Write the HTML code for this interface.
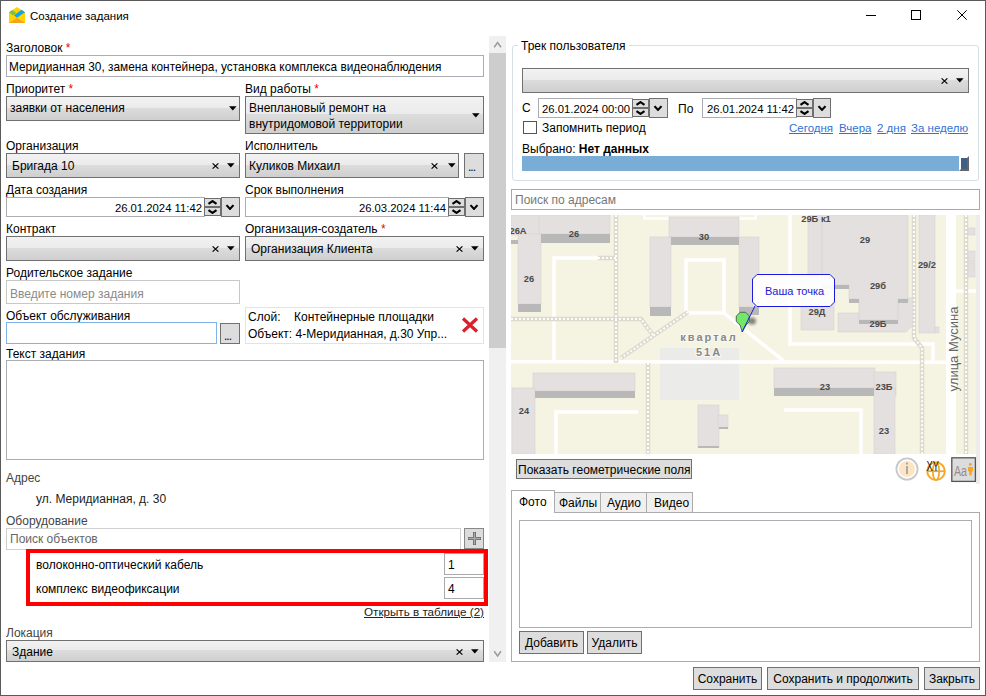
<!DOCTYPE html>
<html><head><meta charset="utf-8">
<style>
*{box-sizing:border-box;margin:0;padding:0}
html,body{width:986px;height:696px;overflow:hidden;background:#fff}
body{position:relative;font-family:"Liberation Sans",sans-serif;font-size:12px;color:#000}
.a{position:absolute}
.t{position:absolute;white-space:nowrap;line-height:14px}
.tb{position:absolute;border:1px solid #abadb3;background:#fff}
.cb{position:absolute;border:1px solid #707070;background:linear-gradient(#f2f2f2,#ebebeb 46%,#dddddd 46%,#cfcfcf)}
.btn{position:absolute;border:1px solid #707070;background:#dddddd}
.req{color:#e00}
.lnk{color:#1a5fc9;text-decoration:underline}
</style></head><body>

<div class="a" style="left:0px;top:0px;width:986px;height:696px;border:1px solid #5a5a5a"></div>
<svg class="a" style="left:9px;top:7px" width="16" height="16" viewBox="0 0 16 16">
<polygon points="0,5.3 8,0 16,5.3 16,16 0,16" fill="#ffd400"/>
<polygon points="0,5.3 3.2,3 7.2,5.8 4,8.4" fill="#7dc242"/>
<polygon points="12.6,2.7 16,5.3 8,10.8 5,8.3" fill="#12a5ea"/>
<polygon points="0,16 8,11 16,16" fill="#f6a21a"/>
</svg>
<div class="t" style="left:30px;top:9px;font-size:11.5px">Создание задания</div>
<div class="a" style="left:866px;top:15px;width:10px;height:1px;background:#000"></div>
<div class="a" style="left:911px;top:10px;width:10px;height:10px;border:1px solid #000"></div>
<svg class="a" style="left:957px;top:10px" width="10" height="10" viewBox="0 0 10 10"><path d="M0.3,0.3 L9.7,9.7 M9.7,0.3 L0.3,9.7" stroke="#000" stroke-width="1"/></svg>
<div class="t" style="left:6px;top:41px;">Заголовок <span class="req">*</span></div>
<div class="tb" style="left:6px;top:55px;width:478px;height:22px;"></div>
<div class="t" style="left:9px;top:60px;font-size:11.85px">Меридианная 30, замена контейнера, установка комплекса видеонаблюдения</div>
<div class="t" style="left:6px;top:82px;">Приоритет <span class="req">*</span></div>
<div class="cb" style="left:6px;top:96px;width:234px;height:25px;"></div>
<div class="t" style="left:10px;top:101px;">заявки от населения</div>
<svg class="a" style="left:229px;top:106px" width="8" height="5" viewBox="0 0 8 5"><path d="M0,0.3 L7.6,0.3 L3.8,4.6 Z" fill="#000"/></svg>
<div class="t" style="left:245px;top:82px;">Вид работы <span class="req">*</span></div>
<div class="cb" style="left:245px;top:96px;width:239px;height:38px;"></div>
<div class="t" style="left:249px;top:101px;">Внеплановый ремонт на</div>
<div class="t" style="left:249px;top:117px;">внутридомовой территории</div>
<svg class="a" style="left:472px;top:113px" width="8" height="5" viewBox="0 0 8 5"><path d="M0,0.3 L7.6,0.3 L3.8,4.6 Z" fill="#000"/></svg>
<div class="t" style="left:6px;top:139px;">Организация</div>
<div class="cb" style="left:6px;top:153px;width:234px;height:25px;"></div>
<div class="t" style="left:12px;top:159px;">Бригада 10</div>
<svg class="a" style="left:227px;top:163px" width="8" height="5" viewBox="0 0 8 5"><path d="M0,0.3 L7.6,0.3 L3.8,4.6 Z" fill="#000"/></svg>
<svg class="a" style="left:212px;top:163px" width="7" height="6" viewBox="0 0 7 6"><path d="M0.6,0.4 L6.4,5.6 M6.4,0.4 L0.6,5.6" stroke="#000" stroke-width="1.2"/></svg>
<div class="t" style="left:245px;top:139px;">Исполнитель</div>
<div class="cb" style="left:245px;top:153px;width:214px;height:25px;"></div>
<div class="t" style="left:249px;top:159px;">Куликов Михаил</div>
<svg class="a" style="left:448px;top:163px" width="8" height="5" viewBox="0 0 8 5"><path d="M0,0.3 L7.6,0.3 L3.8,4.6 Z" fill="#000"/></svg>
<svg class="a" style="left:431px;top:163px" width="7" height="6" viewBox="0 0 7 6"><path d="M0.6,0.4 L6.4,5.6 M6.4,0.4 L0.6,5.6" stroke="#000" stroke-width="1.2"/></svg>
<div class="btn" style="left:464px;top:153px;width:20px;height:25px;"></div>
<div class="t" style="left:464px;width:20px;text-align:center;top:159px"></div>
<div class="t" style="left:468px;top:160px;font-size:12px;letter-spacing:-1px">...</div>
<div class="t" style="left:6px;top:183px;">Дата создания</div>
<div class="tb" style="left:6px;top:197px;width:199px;height:20px;"></div>
<div class="t" style="right:784px;top:201px;font-size:11.3px">26.01.2024 11:42</div>
<div class="btn" style="left:204px;top:198px;width:17px;height:9px;border-color:#6e6e6e"></div>
<div class="btn" style="left:204px;top:207px;width:17px;height:9px;border-color:#6e6e6e"></div>
<svg class="a" style="left:207px;top:200px" width="11" height="5" viewBox="0 0 11 5"><path d="M1.5,3.9 L5.5,1.1 L9.5,3.9" stroke="#000" stroke-width="2.1" fill="none"/></svg>
<svg class="a" style="left:207px;top:209px" width="11" height="5" viewBox="0 0 11 5"><path d="M1.5,1.1 L5.5,3.9 L9.5,1.1" stroke="#000" stroke-width="2.1" fill="none"/></svg>
<div class="btn" style="left:221px;top:197px;width:19px;height:20px;"></div>
<svg class="a" style="left:225px;top:204px" width="10" height="6" viewBox="0 0 10 6"><path d="M1.5,1.1 L5.0,4.9 L8.5,1.1" stroke="#000" stroke-width="2.1" fill="none"/></svg>
<div class="t" style="left:245px;top:183px;">Срок выполнения</div>
<div class="tb" style="left:245px;top:197px;width:204px;height:20px;"></div>
<div class="t" style="right:540px;top:201px;font-size:11.3px">26.03.2024 11:44</div>
<div class="btn" style="left:448px;top:198px;width:17px;height:9px;border-color:#6e6e6e"></div>
<div class="btn" style="left:448px;top:207px;width:17px;height:9px;border-color:#6e6e6e"></div>
<svg class="a" style="left:451px;top:200px" width="11" height="5" viewBox="0 0 11 5"><path d="M1.5,3.9 L5.5,1.1 L9.5,3.9" stroke="#000" stroke-width="2.1" fill="none"/></svg>
<svg class="a" style="left:451px;top:209px" width="11" height="5" viewBox="0 0 11 5"><path d="M1.5,1.1 L5.5,3.9 L9.5,1.1" stroke="#000" stroke-width="2.1" fill="none"/></svg>
<div class="btn" style="left:465px;top:197px;width:19px;height:20px;"></div>
<svg class="a" style="left:469px;top:204px" width="10" height="6" viewBox="0 0 10 6"><path d="M1.5,1.1 L5.0,4.9 L8.5,1.1" stroke="#000" stroke-width="2.1" fill="none"/></svg>
<div class="t" style="left:6px;top:222px;">Контракт</div>
<div class="cb" style="left:6px;top:236px;width:234px;height:25px;"></div>
<svg class="a" style="left:227px;top:246px" width="8" height="5" viewBox="0 0 8 5"><path d="M0,0.3 L7.6,0.3 L3.8,4.6 Z" fill="#000"/></svg>
<svg class="a" style="left:212px;top:246px" width="7" height="6" viewBox="0 0 7 6"><path d="M0.6,0.4 L6.4,5.6 M6.4,0.4 L0.6,5.6" stroke="#000" stroke-width="1.2"/></svg>
<div class="t" style="left:245px;top:222px;">Организация-создатель <span class="req">*</span></div>
<div class="cb" style="left:245px;top:236px;width:239px;height:25px;"></div>
<div class="t" style="left:251px;top:242px;">Организация Клиента</div>
<svg class="a" style="left:471px;top:246px" width="8" height="5" viewBox="0 0 8 5"><path d="M0,0.3 L7.6,0.3 L3.8,4.6 Z" fill="#000"/></svg>
<svg class="a" style="left:456px;top:246px" width="7" height="6" viewBox="0 0 7 6"><path d="M0.6,0.4 L6.4,5.6 M6.4,0.4 L0.6,5.6" stroke="#000" stroke-width="1.2"/></svg>
<div class="t" style="left:6px;top:266px;">Родительское задание</div>
<div class="tb" style="left:6px;top:280px;width:234px;height:24px;border-color:#c8c8c8"></div>
<div class="t" style="left:10px;top:287px;color:#8a8a8a">Введите номер задания</div>
<div class="t" style="left:6px;top:309px;">Объект обслуживания</div>
<div class="tb" style="left:6px;top:322px;width:211px;height:22px;border-color:#7eb4ea"></div>
<div class="btn" style="left:220px;top:323px;width:20px;height:21px;"></div>
<div class="t" style="left:220px;width:20px;text-align:center;top:327px"></div>
<div class="t" style="left:224px;top:329px;font-size:12px;letter-spacing:-1px">...</div>
<div class="tb" style="left:245px;top:307px;width:239px;height:37px;border-color:#e3e3e3"></div>
<div class="t" style="left:248px;top:310px;">Слой:</div>
<div class="t" style="left:294px;top:310px;">Контейнерные площадки</div>
<div class="t" style="left:248px;top:327px;">Объект: 4-Меридианная, д.30 Упр...</div>
<svg class="a" style="left:461px;top:317px" width="18" height="16" viewBox="0 0 18 16"><path d="M2,1.5 L16,14.5 M16,1.5 L2,14.5" stroke="#d8222a" stroke-width="3.2"/></svg>
<div class="t" style="left:6px;top:347px;">Текст задания</div>
<div class="tb" style="left:6px;top:360px;width:478px;height:100px;"></div>
<div class="t" style="left:6px;top:471px;color:#444">Адрес</div>
<div class="t" style="left:36px;top:492px;color:#222">ул. Меридианная, д. 30</div>
<div class="t" style="left:6px;top:514px;color:#444">Оборудование</div>
<div class="tb" style="left:6px;top:528px;width:455px;height:22px;border-color:#d0d0d0"></div>
<div class="t" style="left:10px;top:532px;color:#666">Поиск объектов</div>
<div class="btn" style="left:464px;top:528px;width:20px;height:21px;border-color:#888;background:#dcdcdc"></div>
<svg class="a" style="left:467px;top:531px" width="15" height="15" viewBox="0 0 15 15"><path d="M7.5,1 L7.5,14 M1,7.5 L14,7.5" stroke="#666" stroke-width="3"/><path d="M7.5,1.5 L7.5,13.5 M1.5,7.5 L13.5,7.5" stroke="#aaa" stroke-width="1.4"/></svg>
<div class="a" style="left:26px;top:549px;width:462px;height:57px;border:4px solid #f00"></div>
<div class="t" style="left:36px;top:558px;">волоконно-оптический кабель</div>
<div class="tb" style="left:444px;top:553px;width:40px;height:22px;border-color:#aaa"></div>
<div class="t" style="left:448px;top:558px;">1</div>
<div class="t" style="left:36px;top:582px;">комплекс видеофиксации</div>
<div class="tb" style="left:444px;top:577px;width:40px;height:22px;border-color:#aaa"></div>
<div class="t" style="left:448px;top:582px;">4</div>
<div class="t" style="right:502px;top:605px;color:#222;text-decoration:underline;font-size:11.65px">Открыть в таблице (2)</div>
<div class="t" style="left:6px;top:626px;color:#444">Локация</div>
<div class="cb" style="left:6px;top:640px;width:478px;height:22px;"></div>
<div class="t" style="left:12px;top:645px;">Здание</div>
<svg class="a" style="left:471px;top:649px" width="8" height="5" viewBox="0 0 8 5"><path d="M0,0.3 L7.6,0.3 L3.8,4.6 Z" fill="#000"/></svg>
<svg class="a" style="left:456px;top:649px" width="7" height="6" viewBox="0 0 7 6"><path d="M0.6,0.4 L6.4,5.6 M6.4,0.4 L0.6,5.6" stroke="#000" stroke-width="1.2"/></svg>
<div class="a" style="left:489px;top:36px;width:17px;height:626px;background:#f0f0f0"></div>
<div class="a" style="left:489px;top:53px;width:17px;height:295px;background:#cdcdcd"></div>
<svg class="a" style="left:492px;top:40px" width="11" height="9" viewBox="0 0 11 9"><path d="M2.2,7.3 L5.6,2.6 L9,7.3" stroke="#9a9a9a" stroke-width="1.5" fill="none"/></svg>
<svg class="a" style="left:492px;top:649px" width="11" height="9" viewBox="0 0 11 9"><path d="M2.2,2.3 L5.6,7 L9,2.3" stroke="#9a9a9a" stroke-width="1.5" fill="none"/></svg>
<div class="a" style="left:512px;top:45px;width:467px;height:136px;border:1px solid #d5dfe5;border-radius:3px"></div>
<div class="t" style="left:518px;top:39px;background:#fff;padding:0 3px">Трек пользователя</div>
<div class="cb" style="left:522px;top:68px;width:447px;height:25px;"></div>
<svg class="a" style="left:956px;top:78px" width="8" height="5" viewBox="0 0 8 5"><path d="M0,0.3 L7.6,0.3 L3.8,4.6 Z" fill="#000"/></svg>
<svg class="a" style="left:941px;top:78px" width="7" height="6" viewBox="0 0 7 6"><path d="M0.6,0.4 L6.4,5.6 M6.4,0.4 L0.6,5.6" stroke="#000" stroke-width="1.2"/></svg>
<div class="t" style="left:522px;top:101px;">С</div>
<div class="tb" style="left:538px;top:98px;width:95px;height:20px;"></div>
<div class="t" style="right:356px;top:102px;font-size:11.3px">26.01.2024 00:00</div>
<div class="btn" style="left:632px;top:99px;width:17px;height:9px;border-color:#6e6e6e"></div>
<div class="btn" style="left:632px;top:108px;width:17px;height:9px;border-color:#6e6e6e"></div>
<svg class="a" style="left:635px;top:101px" width="11" height="5" viewBox="0 0 11 5"><path d="M1.5,3.9 L5.5,1.1 L9.5,3.9" stroke="#000" stroke-width="2.1" fill="none"/></svg>
<svg class="a" style="left:635px;top:110px" width="11" height="5" viewBox="0 0 11 5"><path d="M1.5,1.1 L5.5,3.9 L9.5,1.1" stroke="#000" stroke-width="2.1" fill="none"/></svg>
<div class="btn" style="left:649px;top:98px;width:19px;height:20px;"></div>
<svg class="a" style="left:653px;top:105px" width="10" height="6" viewBox="0 0 10 6"><path d="M1.5,1.1 L5.0,4.9 L8.5,1.1" stroke="#000" stroke-width="2.1" fill="none"/></svg>
<div class="t" style="left:678px;top:102px;">По</div>
<div class="tb" style="left:702px;top:98px;width:95px;height:20px;"></div>
<div class="t" style="right:192px;top:102px;font-size:11.3px">26.01.2024 11:42</div>
<div class="btn" style="left:796px;top:99px;width:17px;height:9px;border-color:#6e6e6e"></div>
<div class="btn" style="left:796px;top:108px;width:17px;height:9px;border-color:#6e6e6e"></div>
<svg class="a" style="left:799px;top:101px" width="11" height="5" viewBox="0 0 11 5"><path d="M1.5,3.9 L5.5,1.1 L9.5,3.9" stroke="#000" stroke-width="2.1" fill="none"/></svg>
<svg class="a" style="left:799px;top:110px" width="11" height="5" viewBox="0 0 11 5"><path d="M1.5,1.1 L5.5,3.9 L9.5,1.1" stroke="#000" stroke-width="2.1" fill="none"/></svg>
<div class="btn" style="left:813px;top:98px;width:18px;height:20px;"></div>
<svg class="a" style="left:817px;top:105px" width="10" height="6" viewBox="0 0 10 6"><path d="M1.5,1.1 L5.0,4.9 L8.5,1.1" stroke="#000" stroke-width="2.1" fill="none"/></svg>
<div class="a" style="left:523px;top:121px;width:14px;height:13px;border:1px solid #555;background:#fff"></div>
<div class="t" style="left:542px;top:121px;">Запомнить период</div>
<div class="t" style="left:789px;top:121px;color:#2f73d4;text-decoration:underline;font-size:11.5px">Сегодня</div>
<div class="t" style="left:839px;top:121px;color:#2f73d4;text-decoration:underline;font-size:11.5px">Вчера</div>
<div class="t" style="left:877px;top:121px;color:#2f73d4;text-decoration:underline;font-size:11.5px">2 дня</div>
<div class="t" style="left:911px;top:121px;color:#2f73d4;text-decoration:underline;font-size:11.5px">За неделю</div>
<div class="t" style="left:522px;top:142px;">Выбрано: <b>Нет данных</b></div>
<div class="a" style="left:522px;top:156px;width:437px;height:15px;background:#7aadd6"></div>
<div class="a" style="left:959px;top:156px;width:10px;height:15px;background:#3d5f8a;border-left:2px solid #fff;border-top:2px solid #fff;border-right:2px solid #666;border-bottom:2px solid #666"></div>
<div class="tb" style="left:511px;top:189px;width:469px;height:21px;border-color:#a9a9a9"></div>
<div class="t" style="left:515px;top:193px;color:#777">Поиск по адресам</div>
<svg class="a" style="left:511px;top:215px" width="465" height="239" viewBox="511 215 465 239">
<rect x="511" y="215" width="465" height="239" fill="#f5f3e1"/>
<!-- parking -->
<rect x="660" y="348" width="79" height="52" fill="#ebebe9"/>
<!-- white roads -->
<g stroke="#fff" fill="none" stroke-width="3.5">
<path d="M511,361.8 L946,362.3"/>
<path d="M644.5,213 L644.5,218.5 L755.5,218.5 L755.5,213" stroke-width="2.6"/>
<path d="M554,363 L554,258 L598,258"/>
<path d="M686,313 L686,260 L724,260 L724,313 L686,313"/>
<path d="M724,313 L785,362"/>
<path d="M790,215 L790,344 L933,344 L933,362"/>
<path d="M638,412 L556,412 L556,454"/>
<path d="M784,410 L861,410 L861,454"/>
<path d="M956,291 L976,291"/>
</g>
<rect x="946" y="215" width="10" height="239" fill="#fff"/>
<!-- footways -->
<g fill="none">
<g stroke="#dddbcf" stroke-width="4.5">
<path d="M616,215 L616,363"/>
<path d="M511,319 L641,319 L653,335"/>
<path d="M688,312 L621,358"/>
<path d="M598,258 L616,258"/>
<path d="M648,363 L648,454"/>
<path d="M914,215 L914,338 L922,348 L922,454"/>
<path d="M966,215 L966,454"/>
</g>
<g stroke="#fff" stroke-width="2" stroke-dasharray="2 2">
<path d="M616,215 L616,363"/>
<path d="M511,319 L641,319 L653,335"/>
<path d="M688,312 L621,358"/>
<path d="M598,258 L616,258"/>
<path d="M648,363 L648,454"/>
<path d="M914,215 L914,338 L922,348 L922,454"/>
<path d="M966,215 L966,454"/>
</g>
</g>
<!-- buildings -->
<g fill="#e4e0e0" stroke="#d6d2d2" stroke-width="0.6">
<rect x="511" y="215" width="29" height="20"/>
<rect x="539" y="215" width="71" height="19"/>
<rect x="518" y="234" width="23" height="70"/>
<rect x="669" y="217" width="70" height="20"/>
<rect x="650" y="237" width="21" height="70"/>
<rect x="739" y="237" width="20" height="70"/>
<rect x="533" y="373" width="102" height="18"/>
<rect x="512" y="388" width="23" height="66"/>
<rect x="698" y="405" width="21" height="42"/>
<rect x="718" y="415" width="10" height="13"/>
<rect x="808" y="215" width="14" height="70"/>
<rect x="801" y="281" width="33" height="49"/>
<polygon points="838,313 898,313 898,298 913,298 913,325 906,332 838,332"/>
<polygon points="822,215 908,215 908,299 898,299 898,320 859,320 859,299 849,299 849,285 822,285"/>
<rect x="919" y="215" width="16" height="118"/>
<rect x="935" y="327" width="4" height="6"/>
<rect x="774" y="368" width="101" height="20"/>
<rect x="874" y="372" width="22" height="24"/>
<rect x="874" y="388" width="21" height="66"/>
<rect x="968" y="228" width="7" height="7"/>
<rect x="968" y="251" width="7" height="11"/>
<rect x="968" y="263" width="7" height="14"/>
</g>
<g fill="#b9b8b8">
<rect x="511" y="240" width="7" height="4"/>
<rect x="541" y="234" width="69" height="9"/>
<rect x="518" y="304" width="23" height="8"/>
<rect x="671" y="237" width="68" height="8"/>
<rect x="650" y="307" width="21" height="9"/>
<rect x="739" y="307" width="20" height="8"/>
<rect x="535" y="391" width="100" height="7"/>
<rect x="698" y="446" width="21" height="2"/>
<rect x="719" y="427" width="9" height="2"/>
<rect x="822" y="285" width="27" height="4"/>
<rect x="849" y="299" width="10" height="4"/>
<rect x="898" y="299" width="10" height="4"/>
<rect x="859" y="320" width="39" height="4"/>
<rect x="774" y="388" width="100" height="8"/>
</g>
<!-- labels -->
<g font-family="Liberation Sans" font-size="9.3" font-weight="bold" fill="#4a4a4a" text-anchor="middle">
<text x="518" y="234">26A</text>
<text x="574" y="237">26</text>
<text x="529" y="282">26</text>
<text x="704" y="240">30</text>
<text x="524" y="414">24</text>
<text x="825" y="390">23</text>
<text x="884" y="390">23Б</text>
<text x="884" y="434">23</text>
<text x="816" y="222">29Б к1</text>
<text x="865" y="243">29</text>
<text x="927" y="268">29/2</text>
<text x="878" y="289">29б</text>
<text x="817" y="315">29Д</text>
<text x="878" y="327">29Б</text>
</g>
<g font-family="Liberation Sans" font-size="11" font-weight="bold" fill="#888" stroke="#fbfaf2" stroke-width="2" paint-order="stroke" text-anchor="middle" letter-spacing="2">
<text x="709" y="341">квартал</text>
<text x="709" y="356">51A</text>
</g>
<text font-family="Liberation Sans" font-size="13" fill="#666" text-anchor="middle" transform="translate(957.5,349) rotate(-90)">улица Мусина</text>
<!-- marker -->
<defs><filter id="blr" x="-1" y="-1" width="3" height="3"><feGaussianBlur stdDeviation="1.8"/></filter></defs>
<ellipse cx="752" cy="321" rx="4" ry="3.5" fill="#333" opacity="0.6" filter="url(#blr)"/>
<polygon points="740.3,312.3 745.6,312.3 749.3,316 749.3,321.6 746,325 742.3,332 740,325 736.3,321.6 736.3,316" fill="#72e86a" stroke="#3d4a3d" stroke-width="0.8"/>
<path d="M742,332 L755,306" stroke="#1a1ae0" stroke-width="1"/>
<polygon points="757,274.5 830,274.5 834.5,279 834.5,302 830,306.5 757,306.5 752.5,302 752.5,279" fill="#fff" fill-opacity="0.92" stroke="#1a1ae0" stroke-width="1"/>
<text x="765" y="295" font-family="Liberation Sans" font-size="11" fill="#2020d8">Ваша точка</text>
</svg>
<div class="a" style="left:976px;top:215px;width:4px;height:269px;background:#ececec"></div>
<!-- map tools -->
<svg class="a" style="left:894px;top:454px" width="86" height="30" viewBox="894 454 86 30">
<circle cx="907" cy="469" r="10.6" fill="#fff" stroke="#c8c8c8" stroke-width="1.8"/>
<circle cx="907" cy="469" r="8" fill="#fde4c2"/>
<rect x="906" y="462.5" width="2" height="2" fill="#aaa"/>
<rect x="906" y="466" width="2" height="8" fill="#aaa"/>
<circle cx="936" cy="471.2" r="8.8" fill="none" stroke="#f5a623" stroke-width="1.9"/>
<ellipse cx="936" cy="471.2" rx="3.2" ry="8.8" fill="none" stroke="#f5a623" stroke-width="1.7"/>
<path d="M927,471.2 L945,471.2" stroke="#f5a623" stroke-width="1.7"/>
<text x="926.5" y="470.6" font-family="Liberation Sans" font-size="15.5" fill="#111" textLength="12.5" lengthAdjust="spacingAndGlyphs">XY</text>
<rect x="951.8" y="457.8" width="23.6" height="23.6" fill="#dcdcdc" stroke="#555" stroke-width="1.3"/>
<text x="954" y="475.7" font-family="Liberation Sans" font-size="15.5" fill="#958d8d" textLength="13" lengthAdjust="spacingAndGlyphs">Aa</text>
<circle cx="970.3" cy="464.5" r="1.4" fill="#f5a623"/>
<path d="M968,467 L973,467 L973,471 L972,471.5 L971.5,475.5 L969.5,475.5 L969,471.5 L968,471 Z" fill="#f5a623"/>
</svg>

<div class="btn" style="left:516px;top:459px;width:176px;height:20px;"></div>
<div class="t" style="left:518px;top:463px;">Показать геометрические поля</div>
<div class="a" style="left:511px;top:512px;width:469px;height:150px;border:1px solid #acacac"></div>
<div class="a" style="left:554px;top:492px;width:47px;height:21px;background:#f0f0f0;border:1px solid #acacac"></div>
<div class="t" style="left:559px;top:496px;">Файлы</div>
<div class="a" style="left:600px;top:492px;width:47px;height:21px;background:#f0f0f0;border:1px solid #acacac"></div>
<div class="t" style="left:607px;top:496px;">Аудио</div>
<div class="a" style="left:646px;top:492px;width:47px;height:21px;background:#f0f0f0;border:1px solid #acacac"></div>
<div class="t" style="left:654px;top:496px;">Видео</div>
<div class="a" style="left:511px;top:490px;width:44px;height:23px;background:#fff;border:1px solid #acacac;border-bottom:none"></div>
<div class="t" style="left:519px;top:495px;">Фото</div>
<div class="tb" style="left:519px;top:520px;width:453px;height:108px;"></div>
<div class="btn" style="left:519px;top:631px;width:65px;height:23px;"></div>
<div class="t" style="left:519px;width:65px;text-align:center;top:636px">Добавить</div>
<div class="btn" style="left:587px;top:631px;width:55px;height:23px;"></div>
<div class="t" style="left:587px;width:55px;text-align:center;top:636px">Удалить</div>
<div class="btn" style="left:693px;top:667px;width:69px;height:23px;"></div>
<div class="t" style="left:693px;width:69px;text-align:center;top:672px">Сохранить</div>
<div class="btn" style="left:767px;top:667px;width:152px;height:23px;"></div>
<div class="t" style="left:767px;width:152px;text-align:center;top:672px">Сохранить и продолжить</div>
<div class="btn" style="left:924px;top:667px;width:56px;height:23px;"></div>
<div class="t" style="left:924px;width:56px;text-align:center;top:672px">Закрыть</div>
</body></html>
